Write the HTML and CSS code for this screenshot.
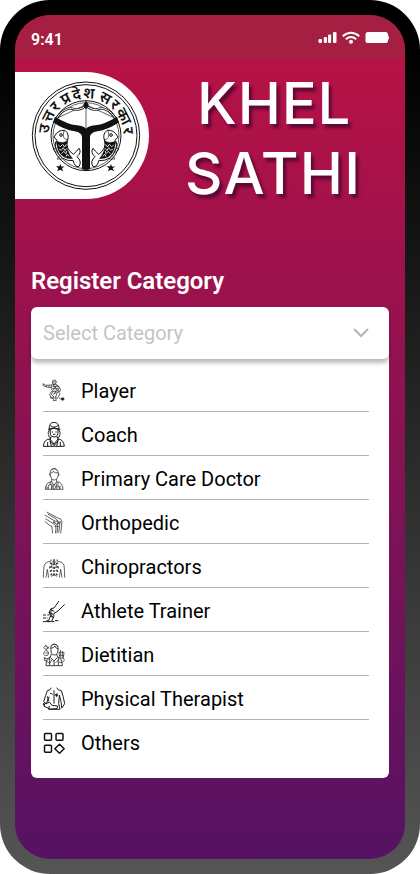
FILE: index.html
```html
<!DOCTYPE html>
<html lang="en">
<head>
<meta charset="utf-8">
<title>Khel Sathi</title>
<link rel="stylesheet" href="styles.css">
</head>
<body>
<div class="phone">
<main class="screen">
  <header class="status">
    <span class="time">9:41</span>
    <svg class="signals" viewBox="0 0 72 14" width="72" height="14" fill="#fff">
      <rect x="0.5" y="9" width="3.5" height="4" rx="1.2"/><rect x="5.8" y="7" width="3.2" height="6" rx="1.2"/><rect x="10" y="4.6" width="3.2" height="8.4" rx="1.2"/><rect x="15" y="2" width="3.5" height="11" rx="1.2"/>
      <g fill="none" stroke="#fff" stroke-width="2"><path d="M24.7 6.2Q33 -.8 41.3 6.2M27.8 9.2Q33 4.900 38.2 9.2"/></g><circle cx="33" cy="11.8" r="2"/>
      <rect x="47.5" y="2" width="22.5" height="11" rx="2.6"/><path d="M70 4.5q1.8 3 0 6z"/>
    </svg>
  </header>
  <section class="brand">
    <div class="plate">
      <svg viewBox="15 18 402 381" width="134" height="127" fill="none" stroke="#111" stroke-width="3">
        <circle cx="228" cy="209" r="161"/><circle cx="228" cy="209" r="153"/><circle cx="228" cy="209" r="105"/><circle cx="228" cy="209" r="99" stroke-width="2"/>
        <path id="arc" d="M116 209A112 112 0 0 1 340 209" stroke="none"/>
        <text class="motto"><textPath href="#arc" startOffset="6" textLength="342">उत्तर प्रदेश सरकार</textPath></text>
        <path d="M228 108V190M138 158L228 116L318 158" stroke-width="2"/>
        <path d="M140 156Q158 128 184 127Q208 137 228 119Q248 137 272 127Q298 128 316 156" stroke-width="7"/>
        <path d="M140 156Q158 128 184 127Q208 137 228 119Q248 137 272 127Q298 128 316 156" stroke="#fff" stroke-width="3"/>
        <path d="M228 106l7 11-7 11-7-11z" fill="#111"/>
        <path d="M135 152Q170 174 201 178Q222 181 228 188Q234 181 255 178Q286 174 321 152L327 169Q293 192 262 196Q240 200 240 214V310Q228 315 216 310V214Q216 200 194 196Q163 192 129 169Z" fill="#111" stroke="none"/>
        <g id="fish"><path d="M132 213Q144 190 165 193Q180 205 172 225Q166 248 190 265Q202 254 207 247Q216 259 201 272Q217 286 207 302Q194 304 190 284Q151 286 139 250Q132 232 141 223Z"/>
        <path d="M138 225Q160 234 171 224Q167 253 188 278Q155 279 144 251Z" fill="#111" stroke-width="1"/>
        <path d="M145 237l6 5 7-7 6 8 5-8M147 249l7 4 6-8 5 9 5-7M155 263l6-7 7 7 2-8M168 272l3-7 7 6" stroke="#fff" stroke-width="2.5"/>
        <circle cx="153" cy="207" r="4"/><path d="M162 195Q154 220 174 221M139 245l-10 5 13 10M148 270l-7 9 17 0" stroke-width="2"/></g>
        <use href="#fish" transform="translate(456 0) scale(-1 1)"/>
        <path id="star" d="M151 294l3 8 10-1-8 6 4 9-9-5-9 5 3-9-7-6 10 0z" fill="#111" stroke="none"/><use href="#star" x="152"/>
      </svg>
    </div>
    <h1 class="title"><span class="khel">KHEL</span><span class="sathi">SATHI</span></h1>
  </section>
  <section class="register">
    <h2>Register Category</h2>
    <div class="select"><span>Select Category</span>
      <svg width="16" height="10" viewBox="0 0 16 10" fill="none" stroke="#b5b5b5" stroke-width="2"><path d="M1 1l7 7 7-7"/></svg>
    </div>
    <ul class="options">
      <li><svg class="icon" viewBox="0 0 72 78"><path d="M3 17l8 5 18-1M4 23l9 4 15 2M3 17l1 6M13 22v5M21 22v6"/><path d="M31 15q-1-9 6-9t6 8l-4 4h-6zM32 12h10M35 18v4M28 21l15-2 9 8-4 11-14 2-6-6zM47 22l9 12-3 8-5-5M33 20l13 17M44 21L33 36M31 26h17M31 32h17"/><path d="M33 39l-5 10 8 8-9 2-4-10 6-10M46 37l8 11-8 13-6-3 5-10-10-7M40 58l3 9-9 1 2-10M24 59l9 3M39 40l10 5M33 49l8-4"/><circle cx="62" cy="63" r="4" class="solid"/><path d="M51 59l6 5"/></svg><span>Player</span></li>
      <li><svg class="icon bold" viewBox="0 0 72 78"><path d="M22 23Q20 1 36 1T51 23L36 19zM25 24Q22 44 36 45T48 24M18 22Q36 13 55 22M25 11Q36 20 49 10M22 24q-5 9-3 13M51 24q5 9 3 13M28 43l-4 8 12 15 12-15-4-8M24 51Q6 51 4 73H67Q65 52 48 51M19 38q2 10 9 10M54 38q-2 10-9 10M17 60v13M55 60v13M36 65v8M28 73l-5-22M44 73l5-22"/><path d="M29 30h4M40 30h4M33 37h7M24 57l10 12M48 57L38 69"/></svg><span>Coach</span></li>
      <li><svg class="icon" viewBox="0 0 72 78"><path d="M25 25Q23 7 36 8T49 25Q47 41 37 42T25 25zM26 21Q32 22 33 16Q40 23 49 20M28 13Q36 2 46 13M23 22q-3 6 3 8M50 22q4 6-2 8M29 39v9L36 57l8-9v-9M29 47Q11 48 10 70H63Q62 48 44 47"/><path d="M25 48l-1 10M48 48v14M31 50l-3 20M42 50l3 20M36 57l-3 6 2 7M37 57l4 6-3 7M19 69V58q6-5 11 0v11M54 69V59M45 62h7v8M15 61v9"/></svg><span>Primary Care Doctor</span></li>
      <li><svg class="icon" viewBox="0 0 72 78"><path d="M14 6L48 24Q59 25 60 36L56 70M8 15L37 32M10 26L34 41M8 34L28 50M17 12L42 26M39 30q-8 5-3 12 9 4 4 28M49 36q-7 6-2 14l-2 20M55 33l-5 35M29 46l3 24M42 27l10 15M36 37l12-5 6 7-10 4zM38 49h13"/></svg><span>Orthopedic</span></li>
      <li><svg class="icon" viewBox="0 0 72 78"><path d="M27 16v5Q9 24 7 33Q4 48 4 71M45 16v5Q64 24 66 33Q68 48 68 71M12 71L16 46M60 71L56 46M16 46L20 71M56 46L52 71"/><path class="heavy" d="M36 16v8M36 28v6M36 38v6M36 48v6M36 58v7M30 30l-6-3M42 30l6-3M29 39h-6M43 39h6M30 48l-6 5M42 48l6 5M30 59l-4 5M42 59l4 5"/><circle cx="36" cy="36" r="7"/><path d="M29 22l7 5 7-5M28 68l8-7 8 7M23 37v7M49 37v7"/></svg><span>Chiropractors</span></li>
      <li><svg class="icon bold" viewBox="0 0 72 78"><path d="M51 9L36 30 27 32 21 43 26 53 20 67 12 70H29L36 55 35 47 48 39 68 19M25 34l12 6M21 43l12 6M25 54l9 5M28 34l-2 14 6 9"/><path stroke-dasharray="9 4" d="M3 51h19M3 60h15M3 71h34"/><path d="M39 68h10"/></svg><span>Athlete Trainer</span></li>
      <li><svg class="icon" viewBox="0 0 72 78"><path class="bold-part" d="M27 23Q24 6 37 7T48 23Q48 39 37 39T27 23M25 19q11-1 14-7 2 8 11 9M28 11Q40 1 47 13M28 36l-3 10 11 11 11-11-3-10M26 44Q12 48 12 71H61Q60 49 48 45M23 48v23M49 47v24M36 57v14"/><path d="M6 16q2-8 8-3l5 5q-6 9-10 3zM10 8l9 12M22 14l-9 7M7 29q9-8 13 4-1 10-10 8-10-3-3-12M10 33h8M5 48l17 4M7 54l15 9M51 31h15l-2 17H54zM55 24v20M61 27v20M53 40h13M65 48q5 8-4 13H51M40 63l10-10M30 53l-8 13M8 45v12"/></svg><span>Dietitian</span></li>
      <li><svg class="icon bold" viewBox="0 0 72 78"><path d="M28 5Q26 12 16 14 11 27 5 47M44 5q3 8 14 9 6 16 10 39L59 67M5 47l8 7L21 32M16 31l4 15M52 27l5 20 2 18M52 28l-2 24 4 18H20l2-10M8 53l15-4 7 9 17 2-2 8-20 1-19-8zM7 59l-4-5 5-4"/><path d="M36 13v40M24 22q5-1 8 4M48 24q-8-1-10 4M40 28h8M44 24v9"/></svg><span>Physical Therapist</span></li>
      <li><svg class="icon tiles" viewBox="0 0 72 78"><rect x="7.5" y="10.5" width="21" height="20" rx="3"/><rect x="42" y="10.500" width="21" height="20" rx="3"/><rect x="7.5" y="45.5" width="21" height="21" rx="3"/><path d="M52.500 43l14 13.500-14 13.500-14-13.500z"/></svg><span>Others</span></li>
    </ul>
  </section>
</main>
</div>
</body>
</html>
```

FILE: styles.css
```css
* { box-sizing: border-box; }
body { margin: 0; background: #fff; font-family: Roboto, sans-serif; }
.phone { width: 420px; height: 874px; padding: 15px; border-radius: 50px; background: linear-gradient(#000 5%, #555); }
.screen { height: 844px; border-radius: 35px; overflow: hidden; background: linear-gradient(#bc1243, #561263); }
.status { height: 44px; padding: 5px 15px 0 16px; display: flex; align-items: center; justify-content: space-between; background: #a51f42; color: #fff; }
.time { font-size: 16px; font-weight: 600; }
.signals { margin-right: 0; margin-top: -5px; }
.brand { display: flex; height: 206px; padding-top: 13px; }
.plate { width: 134px; height: 127px; background: #fff; border-radius: 0 64px 64px 0; overflow: hidden; }
.plate svg { display: block; }
.motto { font: 600 46px "Noto Sans", "Noto Sans Devanagari", sans-serif; word-spacing: -9px; fill: #111; stroke: none; }
.title { margin: -4px 0 0 36px; display: flex; flex-direction: column; font: 500 58px/70px Inter, sans-serif; color: #fff; text-shadow: 3px 4px 3px rgba(70, 5, 50, .75); }
.khel { margin-left: 12px; letter-spacing: .8px; }
.sathi { letter-spacing: 1.2px; }
.register { padding: 0 16px; }
h2 { margin: 0 0 10px; padding-top: 1px; font-size: 24px; line-height: 31px; font-weight: 600; letter-spacing: -.03px; color: #fff; }
.select { position: relative; height: 52px; padding: 0 20px 0 12px; display: flex; align-items: center; justify-content: space-between; border-radius: 6px; background: #fff; color: #c4c4c4; font-size: 20px; box-shadow: 0 4px 4px rgba(0, 0, 0, .27); }
.options { list-style: none; margin: -6px 0 0; padding: 15px 20px 12px 12px; height: 425px; background: #fff; border-radius: 0 0 6px 6px; }
.options li { height: 44px; display: flex; align-items: center; border-bottom: 1px solid #b3b3b3; font-size: 20px; color: #000; padding-top: 2px; }
.options li:last-child { border-bottom: 0; }
.icon { width: 24px; height: 26px; margin: 0 15px 0 -1px; fill: none; stroke: #333; stroke-width: 2.3; stroke-linejoin: round; }
.icon.bold { stroke: #1c1c1c; stroke-width: 3; }
.bold-part { stroke-width: 2.8; }
.heavy { stroke-width: 4.5; }
.icon.tiles { stroke: #111; stroke-width: 4.5; }
.solid { fill: #222; }
```
